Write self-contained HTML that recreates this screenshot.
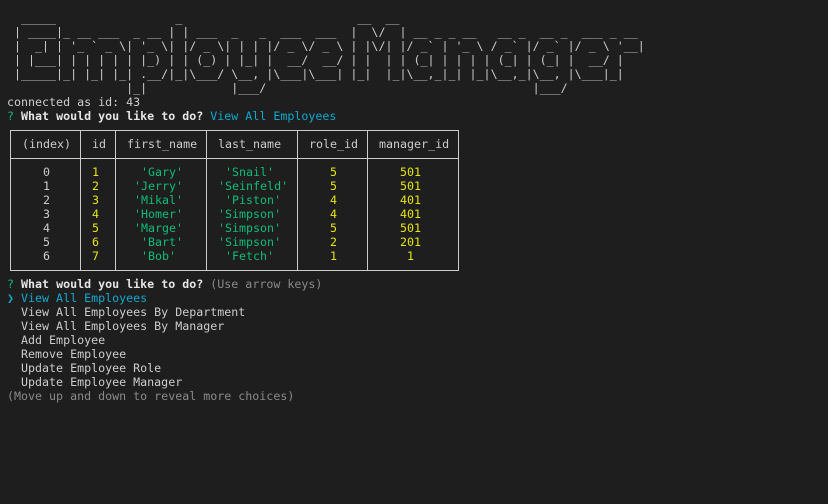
<!DOCTYPE html>
<html><head><meta charset="utf-8"><style>
html,body{margin:0;padding:0;background:#1e1e1e;width:828px;height:504px;overflow:hidden}
pre{position:absolute;left:7px;top:11px;margin:0;font:11.65px/14px "DejaVu Sans Mono","Liberation Mono",monospace;color:#cccccc;white-space:pre}
.t{position:absolute;font:11.65px/14px "DejaVu Sans Mono","Liberation Mono",monospace;color:#cccccc;white-space:pre}
.g,.t.g{color:#0dbc79}.y,.t.y{color:#e5e510}.c{color:#11a8cd}.d{color:#8a8a8a}b{color:#e5e5e5}
.h{position:absolute;background:#cccccc;height:1px;left:10px;width:449px}
.v{position:absolute;background:#cccccc;width:1px;top:130px;height:141px}
</style></head><body>
<pre>  _____                 _                         __  __
 | ____|_ __ ___  _ __ | | ___  _   _  ___  ___  |  \/  | __ _ _ __   __ _  __ _  ___ _ __
 |  _| | '_ ` _ \| '_ \| |/ _ \| | | |/ _ \/ _ \ | |\/| |/ _` | '_ \ / _` |/ _` |/ _ \ '__|
 | |___| | | | | | |_) | | (_) | |_| |  __/  __/ | |  | | (_| | | | | (_| | (_| |  __/ |
 |_____|_| |_| |_| .__/|_|\___/ \__, |\___|\___| |_|  |_|\__,_|_| |_|\__,_|\__, |\___|_|
                 |_|            |___/                                      |___/
connected as id: 43
<span class="g">?</span> <b>What would you like to do?</b> <span class="c">View All Employees</span>











<span class="g">?</span> <b>What would you like to do?</b> <span class="d">(Use arrow keys)</span>
<span class="c">❯ View All Employees</span>
  View All Employees By Department
  View All Employees By Manager
  Add Employee
  Remove Employee
  Update Employee Role
  Update Employee Manager
<span class="d">(Move up and down to reveal more choices)</span></pre>

<div class="h" style="top:130px"></div>
<div class="h" style="top:158px"></div>
<div class="h" style="top:270px"></div>
<div class="v" style="left:10px"></div>
<div class="v" style="left:80px"></div>
<div class="v" style="left:115px"></div>
<div class="v" style="left:206px"></div>
<div class="v" style="left:297px"></div>
<div class="v" style="left:367px"></div>
<div class="v" style="left:458px"></div>

<div class="t" style="top:137px;left:22px">(index)</div>
<div class="t" style="top:137px;left:92px">id</div>
<div class="t" style="top:137px;left:127px">first_name</div>
<div class="t" style="top:137px;left:218px">last_name</div>
<div class="t" style="top:137px;left:309px">role_id</div>
<div class="t" style="top:137px;left:379px">manager_id</div>

<div class="t" style="top:165px;left:43px">0
1
2
3
4
5
6</div>
<div class="t y" style="top:165px;left:92px">1
2
3
4
5
6
7</div>
<div class="t g" style="top:165px;left:134px"> 'Gary'
'Jerry'
'Mikal'
'Homer'
'Marge'
 'Bart'
 'Bob'</div>
<div class="t g" style="top:165px;left:218px"> 'Snail'
'Seinfeld'
 'Piston'
'Simpson'
'Simpson'
'Simpson'
 'Fetch'</div>
<div class="t y" style="top:165px;left:330px">5
5
4
4
5
2
1</div>
<div class="t y" style="top:165px;left:400px">501
501
401
401
501
201
 1</div>
</body></html>
